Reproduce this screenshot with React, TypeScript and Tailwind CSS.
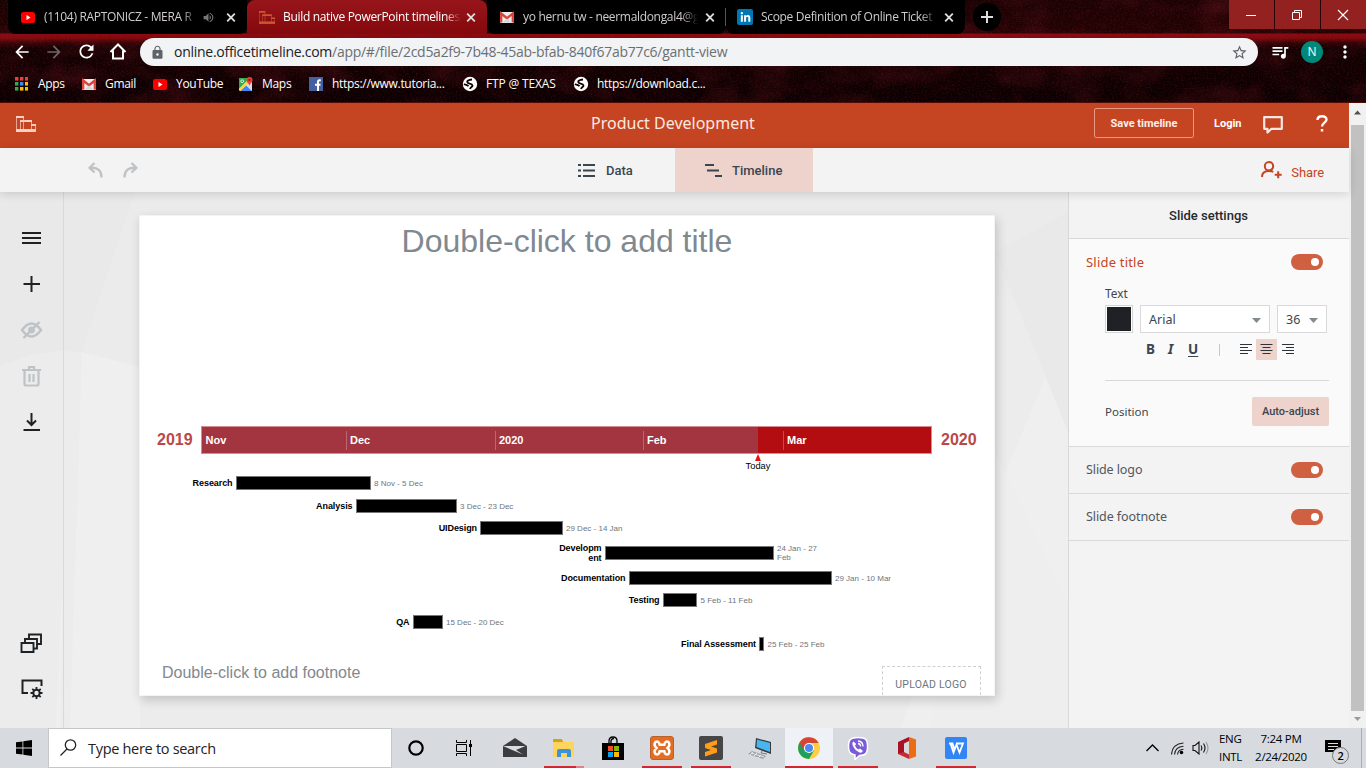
import React from "react";
import { MdArrowBack, MdArrowForward, MdRefresh, MdLock, MdStarBorder, MdQueueMusic, MdMoreVert, MdVolumeUp } from "react-icons/md";
import { FaLinkedinIn } from "react-icons/fa";

const YouTube = () => (
  <svg width="16" height="16" viewBox="0 0 16 16" className="shrink-0">
    <rect x="1" y="3" width="14" height="11" rx="2.6" fill="#f00" />
    <path d="M6.5 6v5l4-2.5z" fill="#fff" />
  </svg>
);

const Gmail = () => (
  <svg width="16" height="16" viewBox="0 0 16 16" className="shrink-0">
    <rect x="1" y="3" width="14" height="11" rx="1" fill="#eee" />
    <path d="M2.200 13.500V4.500L8 9.200l5.800-4.700v9" fill="none" stroke="#db4437" strokeWidth="2.300" />
    <path d="M3.500 13.500L8 9.500l4.500 4z" fill="#d5d5d5" />
  </svg>
);

const TimelineLogo = ({ light = false }: { light?: boolean }) => (
  <svg width={light ? 20 : 16} height={light ? 16 : 13} viewBox="0 0 20 16" className="shrink-0" fill="none" stroke={light ? "#f8cfc3" : "#cf5633"}>
    <path d="M0 1h8M4 5h12M15 9h5" strokeWidth="2" />
    <path d="M.5 1v13M7.500 2v12M4.500 5v9M15.500 5v9M19.500 9v5" strokeWidth="1" opacity=".7" />
    <path d="M0 14.500h20" strokeWidth="3" />
  </svg>
);

const Globe = () => (
  <svg width="16" height="16" viewBox="0 0 16 16" className="shrink-0">
    <circle cx="8" cy="8" r="7.200" fill="#fff" />
    <path d="M10 3.500c-2 .2-4.800 1-4.800 2.500 0 2 5 1.200 5.300 3.500.2 1.500-2 1.500-2.500 3.500M2 8c1.500 1.200 3.500.8 4.500 2.200" fill="none" stroke="#100" strokeWidth="1.800" />
  </svg>
);

const Maps = () => (
  <svg width="16" height="16" viewBox="0 0 16 16" className="shrink-0">
    <rect x="1" y="2" width="13" height="13" rx="1.500" fill="#e8e8e8" />
    <path d="M1 4q0-2 2-2h9L1 13z" fill="#34a853" />
    <path d="M2 15l6-6 6 6z" fill="#4285f4" />
    <path d="M1 13L12 2l2 2L2.500 15z" fill="#ffd44c" />
    <path d="M8 9l6 6V7z" fill="#dcdcdc" />
    <path d="M11.500 10c-.3-2.500-3-3.300-3-6a3 3 0 016 0c0 2.700-2.700 3.500-3 6z" fill="#ea4335" />
    <circle cx="11.500" cy="3.900" r="1.100" fill="#8c1b12" />
    <circle cx="4.200" cy="5.200" r="1.400" fill="none" stroke="#fff" strokeWidth=".8" />
  </svg>
);

const Facebook = () => (
  <svg width="16" height="16" viewBox="0 0 16 16" className="shrink-0">
    <rect x="1" y="1" width="14" height="14" fill="#4460a0" />
    <path d="M12.800 4.300h-1.300q-1.500 0-1.500 1.500V15M7 8.800h5.500" fill="none" stroke="#fff" strokeWidth="2" />
  </svg>
);

const Close = () => (
  <svg width="16" height="16" viewBox="0 0 16 16" className="shrink-0">
    <path d="M4.200 4.700l7.600 7.600M11.800 4.700l-7.600 7.600" stroke="#e2dede" strokeWidth="1.800" />
  </svg>
);

function Noise() {
  return (
    <svg width="1366" height="103" className="pointer-events-none absolute inset-0">
      <filter id="grain" x="0" y="0" width="100%" height="100%">
        <feTurbulence type="fractalNoise" baseFrequency="0.55 0.7" numOctaves="2" seed="4" />
        <feColorMatrix values="0 0 0 0 0.5  0 0 0 0 0.03  0 0 0 0 0.04  1.8 0 0 0 -0.82" />
      </filter>
      <filter id="patch" x="0" y="0" width="100%" height="100%">
        <feTurbulence type="fractalNoise" baseFrequency="0.02 0.035" numOctaves="3" seed="9" />
        <feColorMatrix values="0 0 0 0 0.2  0 0 0 0 0.01  0 0 0 0 0.02  1.6 0 0 0 -0.7" />
      </filter>
      <rect width="1366" height="103" filter="url(#patch)" opacity=".45" />
      <rect width="1366" height="103" filter="url(#grain)" opacity=".26" />
    </svg>
  );
}

function Tab({ icon, text, audio = false, active = false }: { icon: React.ReactNode; text: string; audio?: boolean; active?: boolean }) {
  return (
    <div className={active ? "flex h-[34px] w-[240px] items-center rounded-t-lg bg-[linear-gradient(#98161b,#84080d)] pl-3 pr-2" : "flex h-[34px] w-[239px] items-center rounded-b-lg bg-black pl-3 pr-2"}>
      {icon}
      <span className={(active ? "text-white" : "text-[#d0cbcb]") + " ml-2 min-w-0 flex-1 overflow-hidden whitespace-nowrap text-[12px] tracking-[-0.32px] [mask-image:linear-gradient(to_right,#000_calc(100%-16px),transparent)]"}>{text}</span>
      {audio && <MdVolumeUp size={13} color="#777" className="ml-1 mr-[4px] shrink-0" />}
      <span className={active ? "ml-0.5 flex" : "ml-1 flex"}><Close /></span>
    </div>
  );
}

function Browser() {
  return (
    <div className="relative h-[103px] overflow-hidden bg-[linear-gradient(#1a0203_0px,#220203_33px,#8d090e_34px,#80080c_38px,#300305_43px,#120102_48px,#0b0001_103px)] font-['Open_Sans','Noto_Sans',sans-serif]">
      <Noise />
      <div className="relative flex h-[34px] pl-2">
        <Tab icon={<YouTube />} text="(1104) RAPTONICZ - MERA R" audio />
        <Tab icon={<TimelineLogo />} text="Build native PowerPoint timelines" active />
        <Tab icon={<Gmail />} text="yo hernu tw - neermaldongal4@g" />
        <div className="my-2 -ml-px w-px bg-[#555]" />
        <Tab icon={<span className="-ml-px flex size-4 shrink-0 items-center justify-center rounded-[2px] bg-[#0077b5]"><FaLinkedinIn size={11} color="white" /></span>} text="Scope Definition of Online Ticket" />
        <div className="ml-2 mt-[3px] flex size-7 items-center justify-center rounded-full bg-black">
          <svg width="14" height="14"><path d="M7 1v12M1 7h12" stroke="#ddd" strokeWidth="2" /></svg>
        </div>
        <div className="ml-auto flex h-[29px] gap-px">
          <div className="flex w-[45px] items-center justify-center bg-[#92211f] pr-px"><svg width="12" height="12"><path d="M1 6.500h10" stroke="#fff" /></svg></div>
          <div className="flex w-[45px] items-center justify-center bg-[#92211f] pr-px"><svg width="12" height="12" fill="none" stroke="#fff"><path d="M1.500 3.500h7v7h-7zM3.500 3.500v-2h7v7h-2" /></svg></div>
          <div className="flex w-[45px] items-center justify-center bg-[#92211f] pr-px"><svg width="12" height="12"><path d="M1 1l10 10M11 1L1 11" stroke="#fff" strokeWidth="1.200" /></svg></div>
        </div>
      </div>
      <div className="relative flex h-[35px] items-center pl-3 text-white">
        <MdArrowBack size={20} />
        <MdArrowForward size={20} color="#6f6565" className="ml-3" />
        <MdRefresh size={21} className="ml-3" />
        <svg width="20" height="20" viewBox="0 0 20 20" className="ml-[11px]"><path d="M2.500 10L10 2.500l7.500 7.500M5 8.500v8h10v-8" fill="none" stroke="#fff" strokeWidth="2" /></svg>
        <div className="ml-3 mt-px flex h-7 w-[1118px] items-center rounded-full bg-[#f1f3f4] pl-[10px] pr-[10px] text-[14px]">
          <MdLock size={15} color="#5f6368" />
          <span className="-mt-px ml-[9px] flex-1 whitespace-nowrap tracking-[-0.27px] text-[#6b6f73]"><span className="text-[#202124]">online.officetimeline.com</span>/app/#/file/2cd5a2f9-7b48-45ab-bfab-840f67ab77c6/gantt-view</span>
          <MdStarBorder size={17} color="#5f6368" />
        </div>
        <MdQueueMusic size={20} className="ml-3" />
        <div className="ml-[11px] flex size-[22px] items-center justify-center rounded-full bg-[#00897b] text-[12px]">N</div>
        <MdMoreVert size={20} className="ml-3" />
      </div>
      <div className="relative flex h-[30px] items-center pl-[14px] text-[12px] tracking-[-0.3px] text-white">
        <svg width="14" height="14" className="mr-[10px]">
          {["#ea4335", "#ea4335", "#ea4335", "#34a853", "#4285f4", "#fbbc05", "#34a853", "#fbbc05", "#fbbc05"].map((c, i) => (
            <rect key={i} x={1 + (i % 3) * 5} y={Math.floor(i / 3) * 5} width="3.400" height="3.600" fill={c} />
          ))}
        </svg>
        <span className="w-[43px]">Apps</span>
        <Gmail /><span className="ml-2 w-[47px]">Gmail</span>
        <YouTube /><span className="ml-2 w-[62px]">YouTube</span>
        <Maps /><span className="ml-2 w-[46px]">Maps</span>
        <Facebook /><span className="ml-2 w-[130px]">https://www.tutoria...</span>
        <Globe /><span className="ml-2 w-[87px] tracking-[-0.15px]">FTP @ TEXAS</span>
        <Globe /><span className="ml-2">https://download.c...</span>
      </div>
      <div className="absolute inset-x-0 bottom-0 h-px bg-[#4d0c08]" />
    </div>
  );
}

function AppBars() {
  return (
    <>
      <div className="flex h-[45px] shrink-0 items-center bg-[#c54421] pl-4 pr-[20px] text-[11px] font-bold text-[#fdeee9]">
        <div className="-mt-1 flex w-[575px]"><TimelineLogo light /></div>
        <span className="-mt-[6px] w-[503px] font-['Noto_Sans',sans-serif] text-[16px] font-normal text-[#fbe9e2]">Product Development</span>
        <button className="-mt-[5px] h-[30px] w-[100px] shrink-0 rounded-[2px] border border-[#e49a84] pt-[2px]">Save timeline</button>
        <span className="-mt-[3px] ml-5 w-[49px] text-white">Login</span>
        <svg width="20" height="18" viewBox="0 0 20 18" className="-mt-0.5"><path d="M1.200 1.200h17.600v11.600H8.500l-4 3.700v-3.700H1.200z" fill="none" stroke="#f9e7e1" strokeWidth="2.200" strokeLinejoin="round" /></svg>
        <svg width="12" height="17" viewBox="0 0 12 17" className="ml-[33px] -mt-1"><path d="M1.500 5c0-5 9-5 9-.4 0 3-4.500 3.200-4.500 7M6 14v2.500" fill="none" stroke="#fff" strokeWidth="2.400" /></svg>
      </div>
      <div className="relative z-10 flex h-11 shrink-0 items-center bg-[#f3f3f3] text-[13px] font-medium text-[#3b4550] shadow-[0_2px_9px_rgba(0,0,0,0.14)]">
        <div className="flex w-[537px] gap-[18px] pl-[88px]">
          <svg width="16" height="16" viewBox="0 0 16 16" fill="none" stroke="#bfc3c5" strokeWidth="2.300"><path d="M6.500 1L1.500 5.800l5 4.700M2 5.800c8-.5 11.500 3 11.500 9.700" /></svg>
          <svg width="16" height="16" viewBox="0 0 16 16" fill="none" stroke="#bfc3c5" strokeWidth="2.300"><path d="M9.500 1l5 4.800-5 4.700M14 5.800C6 5.300 2.500 8.800 2.500 15.500" /></svg>
        </div>
        <div className="flex h-11 w-[138px] items-center pl-[41px]">
          <svg width="17" height="13" stroke="#3b4550" strokeWidth="2"><path d="M0 1h3M5 1h12M0 6.500h3M5 6.500h12M0 12h3M5 12h12" /></svg>
          <span className="ml-[11px] mt-px">Data</span>
        </div>
        <div className="flex h-11 w-[138px] items-center bg-[#edd3cc] pl-[30px]">
          <svg width="17" height="13" stroke="#3b4550" strokeWidth="2"><path d="M0 1h9M2 6.500h12M10 12h7" /></svg>
          <span className="ml-[10px] mt-px">Timeline</span>
        </div>
        <div className="ml-auto flex items-center pr-[25px] font-normal text-[#c54421]">
          <svg width="21" height="18" viewBox="0 0 21 18" fill="none" stroke="#c54421" strokeWidth="2"><circle cx="8" cy="5.200" r="4.200" /><path d="M1 16c0-4 2.500-6 7-6 2 0 3 .3 4.200 1M17.200 10.300v7M13.700 13.800h7" /></svg>
          <span className="ml-[9px] mt-[5px] tracking-[-0.1px]">Share</span>
        </div>
      </div>
    </>
  );
}

function SideIcons() {
  const s = { fill: "none", stroke: "#1f2225", strokeWidth: 2 };
  const g = { fill: "none", stroke: "#bfc3c5", strokeWidth: 2 };
  return (
    <div className="relative flex w-16 shrink-0 flex-col items-center border-r border-[#d9d9d9] pt-[34px]">
      <svg width="24" height="24" className="mb-[22px]" {...s}><path d="M2 7h19M2 12h19M2 17h19" /></svg>
      <svg width="24" height="24" className="mb-[22px]" {...s}><path d="M11.500 4v16M3.500 12H20" /></svg>
      <svg width="24" height="24" className="mb-[22px]" {...g}><path d="M2 12q9.500-13 19 0-9.500 13-19 0z" strokeWidth="2.300" /><circle cx="11.500" cy="12" r="3.400" fill="#bfc3c5" stroke="none" /><path d="M3.500 20L19.500 4" strokeWidth="2.400" /></svg>
      <svg width="24" height="24" className="mb-[21px]" {...g} strokeWidth="2.200"><path d="M2 6h19M9 5V3h5v2M4.500 6v14q0 1.500 1.500 1.500h11q1.500 0 1.500-1.500V6M9.500 10v8M13.500 10v8" /></svg>
      <svg width="24" height="24" {...s}><path d="M11.500 4v12M7 11.500l4.500 4.500 4.500-4.500M3.500 21H20" /></svg>
      <div className="mt-auto flex flex-col items-center gap-[22px] pb-[27px]">
        <svg width="24" height="24" {...s} strokeWidth="1.900"><path d="M1.500 12h12v9h-12zM5 12V8h12v9.500h-3.500M9 8V3.500h12V13h-3.500" /></svg>
        <svg width="24" height="24" {...s}><path d="M8 16H2.500V3.500h19V9" /><circle cx="16.500" cy="16" r="3.200" /><path d="M16.500 10v3M16.500 19v3M10.500 16h3M19.500 16h3M12.300 11.800l2 2M18.700 18.200l2 2M20.700 11.800l-2 2M14.300 18.200l-2 2" strokeWidth="1.800" /></svg>
      </div>
    </div>
  );
}

const tasks = [
  { name: "Research", dates: "8 Nov - 5 Dec", from: 96, len: 135, h: 22 },
  { name: "Analysis", dates: "3 Dec - 23 Dec", from: 216, len: 101, h: 24 },
  { name: "UIDesign", dates: "29 Dec - 14 Jan", from: 340.5, len: 82.500, h: 20 },
  { name: "Developm\nent", dates: "24 Jan - 27\nFeb", from: 465, len: 169, h: 30 },
  { name: "Documentation", dates: "29 Jan - 10 Mar", from: 489, len: 203, h: 20 },
  { name: "Testing", dates: "5 Feb - 11 Feb", from: 523, len: 34.500, h: 24 },
  { name: "QA", dates: "15 Dec - 20 Dec", from: 273, len: 30, h: 20 },
  { name: "Final Assessment", dates: "25 Feb - 25 Feb", from: 619.500, len: 5, h: 24 },
];

const months = [
  { name: "Nov", w: 144 },
  { name: "Dec", w: 149 },
  { name: "2020", w: 148 },
  { name: "Feb", w: 140 },
  { name: "Mar", w: 148 },
];

function Slide() {
  return (
    <div className="relative flex h-[481px] w-[856px] flex-col overflow-hidden border border-[#f4f4f4] bg-white font-['Liberation_Sans',Arial,sans-serif]">
      <h1 className="mt-[6px] text-center text-[32px] leading-[38px] text-[#7f898f]">Double-click to add title</h1>
      <div className="mt-[166px] flex h-[28px] items-center pl-[17px] text-[16px] font-bold text-[#b94945]">
        <span className="w-[44px]">2019</span>
        <div className="relative flex h-[28px] w-[731px] items-center border border-[#d78c92] bg-[linear-gradient(to_right,#a33540_556px,#b30d12_556px)] text-[11px] text-white">
          {months.map((m, i) => (
            <div key={m.name} className={i ? "flex h-[19px] shrink-0 items-center border-l border-white/25 pl-[3px]" : "flex h-[19px] shrink-0 items-center pl-[3.500px]"} style={{ width: m.w }}>{m.name}</div>
          ))}
          <div className="absolute left-[543px] top-[26.500px] flex w-[26px] flex-col items-center text-[9.300px] font-normal leading-[10px] text-black">
            <svg width="6" height="7"><path d="M3 0l3 7H0z" fill="#e81010" /></svg>
            Today
          </div>
        </div>
        <span className="ml-[9px]">2020</span>
      </div>
      <div className="mt-[18px] flex flex-col">
        {tasks.map((t) => (
          <div key={t.name} className="flex items-center whitespace-pre" style={{ height: t.h }}>
            <div className="pr-[3px] text-right text-[9px] font-bold leading-[10px] tracking-[-0.08px] text-black" style={{ width: t.from - 0.5 }}>{t.name}</div>
            <div className="h-[14px] border border-[#777] bg-black" style={{ width: t.len }} />
            <div className="ml-[3.500px] text-[8px] leading-[9px] text-[#6d767c]">{t.dates}</div>
          </div>
        ))}
      </div>
      <div className="flex pl-[22px]">
        <span className="mt-[7px] w-[720px] text-[16px] leading-5 text-[#7f898f]">Double-click to add footnote</span>
        <div className="mt-[10px] h-[40px] w-[99px] shrink-0 border border-dashed border-[#cfcfcf] pr-px pt-[10px] text-center font-['Roboto',sans-serif] text-[10.500px] tracking-[0.2px] text-[#6d767c]">UPLOAD LOGO</div>
      </div>
    </div>
  );
}

const Toggle = () => (
  <div className="flex h-4 w-8 items-center justify-end rounded-full bg-[#cf6142] pr-1"><div className="size-2 rounded-full bg-white" /></div>
);

function Settings() {
  const ic = (d: string) => <svg width="13" height="11" stroke="#2e3338" strokeWidth="1"><path d={d} /></svg>;
  return (
    <div className="relative w-[281px] shrink-0 border-l border-[#d9d9d9] bg-[#f3f3f3] font-['Noto_Sans',sans-serif] text-[12.500px] text-[#50575e]">
      <div className="flex h-[47px] items-center justify-center border-b border-[#d9d9d9] pr-px pt-px font-['Roboto',sans-serif] text-[13px] font-medium text-[#26292d]">Slide settings</div>
      <div className="h-[208px] border-b border-[#d9d9d9] bg-[#fafafa] pl-[17px] pr-5">
        <div className="flex h-[46px] items-center justify-between pr-[6px] text-[13px] tracking-[0.2px] text-[#c54421]"><span className="mt-0.5">Slide title</span><Toggle /></div>
        <div className="pl-[19px]">
          <div className="h-5 text-[11.800px] leading-[17px] text-[#3b4550]">Text</div>
          <div className="flex gap-2 text-[12.500px] text-[#3b4550]">
            <div className="size-7 border border-[#d5d5d5] bg-white p-px"><div className="size-full bg-[#202124]" /></div>
            <div className="-ml-px flex h-7 w-[130px] items-center justify-between border border-[#d9d9d9] bg-white px-2 pt-0.5">Arial<svg width="9" height="5"><path d="M0 0h9L4.500 5z" fill="#7f8a91" /></svg></div>
            <div className="-ml-px flex h-7 w-[50px] items-center justify-between border border-[#d9d9d9] bg-white px-2 pt-0.5">36<svg width="9" height="5"><path d="M0 0h9L4.500 5z" fill="#7f8a91" /></svg></div>
          </div>
          <div className="mt-[6px] flex h-[21px] items-center pl-[41px] text-[13.500px] font-bold text-[#3b4550]">
            <span className="w-[22px]">B</span><span className="w-[20px] italic">I</span><span className="w-[31px] underline underline-offset-2">U</span>
            <span className="mr-5 h-3 w-px bg-[#c8c8c8]" />
            {ic("M0 .5h12M0 3.500h8M0 6.500h12M0 9.500h8")}
            <span className="ml-[3px] mr-1 flex h-[21px] w-[21px] items-center justify-center bg-[#edd3cc]">{ic("M.5 .5h12M2.500 3.500h8M.5 6.500h12M2.500 9.500h8")}</span>
            {ic("M1 .5h12M5 3.500h8M1 6.500h12M5 9.500h8")}
          </div>
          <div className="mt-5 border-t border-[#d9d9d9]" />
          <div className="mt-4 flex h-[29px] items-center justify-between text-[11.500px] text-[#3b4550]"><span className="mt-px">Position</span><span className="flex h-[29px] w-[77px] items-center justify-center rounded-[2px] bg-[#edd3cc] pt-px font-['Roboto',sans-serif] text-[11px] font-medium">Auto-adjust</span></div>
        </div>
      </div>
      <div className="flex h-[47px] items-center justify-between border-b border-[#d9d9d9] pl-[17px] pr-[26px] tracking-[-0.1px]">Slide logo<Toggle /></div>
      <div className="flex h-[47px] items-center justify-between border-b border-[#d9d9d9] pl-[17px] pr-[26px] tracking-[-0.08px]">Slide footnote<Toggle /></div>
    </div>
  );
}

function Workspace() {
  return (
    <div className="relative flex flex-1 bg-[#ececec]">
      <svg width="1068" height="536" className="absolute left-0 top-0">
        <path d="M0 0h135L82 160 60 159 30 163 0 174z" fill="#e9e9e9" />
        <path d="M82 160L135 0h933v100L140 175z" fill="#ebebeb" />
        <path d="M82 160l58 15v361H70z" fill="#efefef" />
        <path d="M64 350l-8 186h1012V130L900 536H60z" fill="#efefef" />
        <path d="M995 60l73-40v220z" fill="#e9e9e9" />
        <path d="M995 260l73 150v126H930z" fill="#eeeeee" />
      </svg>
      <SideIcons />
      <div className="relative flex-1 pl-[75px] pt-[23px]">
        <div className="w-[856px] shadow-[2px_4px_10px_rgba(0,0,0,0.18)]"><Slide /></div>
      </div>
      <Settings />
    </div>
  );
}

const taskIcons: { icon: React.ReactNode; open?: boolean; current?: boolean; multi?: boolean }[] = [
  { icon: <svg width="18" height="18" className="-ml-0.5"><circle cx="9" cy="9" r="6.700" fill="none" stroke="#000" strokeWidth="2.200" /></svg> },
  { icon: <svg width="18" height="16" fill="none" stroke="#000" className="-ml-1"><path d="M1.500 4.500h10v7h-10zM1.500 0v2.500h10V0M1.500 16v-2.500h10V16M15.500 0v16" /><path d="M14 4h3v3h-3z" fill="#000" stroke="none" /></svg> },
  { icon: <svg width="24" height="20"><path d="M0 8l12-8 12 8v11H0z" fill="#3b3d40" /><path d="M0 8h22.500l-9.500 4 7 4.500z" fill="#dadde0" /></svg> },
  { icon: <svg width="22" height="19"><path d="M0 1h9l2 2h10v15H0z" fill="#ffd45c" /><path d="M0 0h9l1 3H0z" fill="#d9a015" /><path d="M4 18v-6q0-2 2-2h10q2 0 2 2v6h-4v-4H8v4z" fill="#3b93dc" /></svg>, open: true, multi: true },
  { icon: <svg width="24" height="24"><path d="M1 7h22v17H1z" /><path d="M8 8V5q0-4 4-4t4 4v3M10 8V5q0-2.500 3-2.500" fill="none" stroke="#000" strokeWidth="1.300" /><path d="M7 10h5v5H7z" fill="#f25022" /><path d="M13 10h5v5h-5z" fill="#7fba00" /><path d="M7 16h5v5H7z" fill="#00a4ef" /><path d="M13 16h5v5h-5z" fill="#ffb900" /></svg> },
  { icon: <svg width="24" height="24"><rect x=".5" y=".5" width="23" height="23" rx="2.500" fill="#e46d22" stroke="#b9602c" /><path d="M5.500 6q3.500-1.500 4.200 2.800h4.600Q15 4.500 18.500 6q2.300 3-1 6 3.300 3 1 6-3.500 1.500-4.200-2.800H9.700Q9 19.500 5.500 18q-2.300-3 1-6-3.300-3-1-6z" fill="none" stroke="#fff" strokeWidth="2.500" /></svg>, open: true },
  { icon: <svg width="24" height="24"><rect width="24" height="24" rx="2" fill="#464646" /><path d="M6 8l12-4v4.500l-6 2 6 2v4L6 20.500V16l6-2-6-2z" fill="#ff9c18" /></svg>, open: true },
  { icon: <svg width="24" height="24"><path d="M8 2l15 4v12L7 12z" fill="#353a40" /><path d="M9 3.500l13 3.500v9L8.500 11z" fill="#48b5ef" /><path d="M14 15l-1 2 6 1" stroke="#777" fill="none" /><path d="M4 15l14 5-3 3L0 18z" fill="#9da3a7" /><path d="M3 17l13 4M5 16l-3 3M9 17l-3 3M13 19l-3 3" stroke="#e6e8e9" /></svg> },
  { icon: <svg width="24" height="24"><circle cx="12" cy="12" r="11" fill="#ffcd43" /><path d="M12 12L2.500 6.500A11 11 0 0 0 12 23l5-8.500z" fill="#1ba15b" /><path d="M2.500 6.500A11 11 0 0 1 21.600 7H12l-5 8z" fill="#d64436" /><circle cx="12" cy="12" r="5.100" fill="#fff" /><circle cx="12" cy="12" r="4" fill="#4a8af4" /></svg>, current: true },
  { icon: <svg width="24" height="24" viewBox="0 0 24 24"><path d="M12 1.500c8 0 9.500 2 9.500 9s-2 9-8 9L9 23.500v-4.500c-5-1-6.500-3-6.500-8.500 0-7 2-9 9.500-9z" fill="#7a5bd8" stroke="#fff" strokeWidth="1.500" /><path d="M7.500 5.500q-2 1.500-.5 4.500 2 4.500 6.500 6.500 2 .8 3.500-1.500l-3-2.500-1.500 1q-2.500-1-3.500-4l1.200-1.500z" fill="#fff" /><path d="M12 5q5 .5 5 5.500M12 7.500q2.500.3 2.700 3" fill="none" stroke="#fff" strokeWidth="1.300" /></svg>, open: true },
  { icon: <svg width="20" height="24"><path d="M1 6L12 1v4L7 7.500v10L1 18z" fill="#a91222" /><path d="M12 1l7 2.500v17L12 23z" fill="#ec6c13" /><path d="M1 18l6-2 5 2.500V23z" fill="#c72b35" /></svg> },
  { icon: <svg width="22" height="22"><rect width="22" height="22" rx="2" fill="#3185f5" /><path d="M4 6.500h3.500l2 6M5.500 6.500l3 9 3-8 3 8 3.500-9H11" fill="none" stroke="#fff" strokeWidth="1.800" /></svg>, open: true },
];

function Taskbar() {
  return (
    <div className="flex h-10 bg-[#d7dbdf] font-['Open_Sans','Noto_Sans',sans-serif] text-black">
      <div className="flex w-12 items-center justify-center"><svg width="16" height="16"><path d="M0 2.300L6.500 1.400v6.100H0zM7.300 1.300L16 0v7.500H7.300zM0 8.400h6.500v6.200L0 13.700zM7.300 8.400H16V16l-8.700-1.300z" /></svg></div>
      <div className="flex w-[344px] items-center border border-[#c4c7ca] bg-white pl-[11px] pt-px text-[14.500px] tracking-[-0.3px] text-[#222]">
        <svg width="17" height="17" className="mr-[11px] -mt-0.5" fill="none" stroke="#222" strokeWidth="1.300"><circle cx="10.500" cy="6" r="5.200" /><path d="M7 10L.5 16.500" /></svg>
        Type here to search
      </div>
      <div className="ml-px flex gap-px">
        {taskIcons.map((t, i) => (
          <div key={i} className={t.current ? "flex w-12 flex-col items-center bg-[#eef1f5]" : "flex w-12 flex-col items-center"}>
            <div className="flex h-[38px] items-center pt-[2px]">{t.icon}</div>
            {t.current && <div className="h-[2px] w-12 bg-[#d32630]" />}
            {t.open && <div className={t.multi ? "h-[2px] w-10 bg-[linear-gradient(to_right,#d32630_32px,#e18187_32px)]" : "h-[2px] w-10 bg-[#d32630]"} />}
          </div>
        ))}
      </div>
      <div className="ml-auto flex items-center text-[11.500px] leading-[18px] tracking-[-0.3px]">
        <svg width="13" height="8" className="mr-[12px]" fill="none" stroke="#000" strokeWidth="1.300"><path d="M.5 7l6-6 6 6" /></svg>
        <svg width="13" height="13" className="mr-[8px]" fill="none" stroke="#222" strokeWidth="1.100"><path d="M.5 12.500Q1 2 12.500 1M3.500 12.500Q4 5 12.500 4.200M6.500 12.500q.5-5 6-5.300" /><circle cx="10.500" cy="10.500" r="1.800" fill="#000" stroke="none" /></svg>
        <svg width="17" height="14" className="mr-[10px]" fill="none" stroke="#111" strokeWidth="1.100"><path d="M1 4.500h2l4-3.500v12l-4-3.500H1zM9 4.500q1.700 2.500 0 5M11.500 2.500q3 4.500 0 9" /><path d="M14 1q4 6 0 12" stroke="#999" /></svg>
        <div className="w-[35px]">ENG<br />INTL</div>
        <div className="w-[54px] whitespace-nowrap text-center">7:24 PM<br />2/24/2020</div>
        <div className="relative ml-[17px] w-[36px]">
          <svg width="17" height="16"><path d="M0 0h16v12h-5l-3 3v-3H0z" /><path d="M3 3.500h10M3 6.500h10M3 9.500h6" stroke="#ddd" /></svg>
          <span className="absolute left-[7px] top-[7px] flex size-[17px] items-center justify-center rounded-full border border-[#777] bg-[#d7dbdf] text-[11px] font-semibold">2</span>
        </div>
        <div className="h-10 w-[5px] border-l border-[#aaaeb2]" />
      </div>
    </div>
  );
}

export default function App() {
  return (
    <div className="flex h-[768px] w-[1366px] flex-col overflow-hidden font-['Roboto',sans-serif]">
      <Browser />
      <div className="flex h-[625px]">
        <div className="flex w-[1349px] flex-col"><AppBars /><Workspace /></div>
        <div className="flex w-[17px] flex-col items-center bg-[#f1f1f1]">
          <svg width="17" height="22"><path d="M5 11.500l3.500-4 3.500 4z" fill="#505050" /></svg>
          <div className="w-[13px] flex-1 bg-[#c1c1c1]" />
          <svg width="17" height="17"><path d="M5 6l3.500 4L12 6z" fill="#999" /></svg>
        </div>
      </div>
      <Taskbar />
    </div>
  );
}
